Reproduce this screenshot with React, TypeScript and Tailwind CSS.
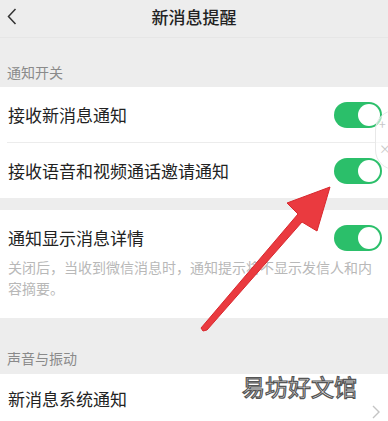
import React from 'react';

const Toggle: React.FC = () => (
    <div className="w-[48px] h-[26px] rounded-full bg-[#2bbf6a] flex items-center justify-end pr-[2px]">
        <div className="w-[22px] h-[22px] rounded-full bg-white" />
    </div>
);

export default function App() {
    return (
        <div
            className="relative w-[388px] h-[421px] overflow-hidden bg-[#ededed] text-[#222]"
            style={{ fontFamily: '"Noto Sans CJK SC", "Noto Sans", sans-serif' }}
        >
            {/* Header */}
            <div className="relative h-[38px] flex items-center justify-center border-b border-[#e6e6e6]">
                <svg className="absolute left-[7px] top-[8px]" width="10" height="17" viewBox="0 0 10 17">
                    <path d="M8.5 1 L1.5 8.5 L8.5 16" fill="none" stroke="#333" strokeWidth="1.5" />
                </svg>
                <span className="text-[17px] font-medium leading-none -mt-[4px]">新消息提醒</span>
            </div>

            {/* Section: 通知开关 */}
            <div className="h-[49px] flex items-end pb-[8px] px-[7px] text-[14px] text-[#8a8a8a] leading-none">
                通知开关
            </div>
            <div className="bg-white">
                <div className="h-[55px] flex items-center justify-between pl-[8px] pr-[6px]">
                    <span className="text-[17px]">接收新消息通知</span>
                    <Toggle />
                </div>
                <div className="ml-[7px] h-px bg-[#ececec]" />
                <div className="h-[55px] flex items-center justify-between pl-[8px] pr-[6px]">
                    <span className="text-[17px]">接收语音和视频通话邀请通知</span>
                    <Toggle />
                </div>
            </div>

            <div className="h-[12px]" />

            <div className="bg-white h-[108px] pl-[8px] pr-[6px] pt-[14px]">
                <div className="flex items-center justify-between h-[28px]">
                    <span className="text-[17px]">通知显示消息详情</span>
                    <Toggle />
                </div>
                <p className="mt-[5px] text-[14px] leading-[21px] text-[#b8b8b8] pr-[4px]">
                    关闭后，当收到微信消息时，通知提示将不显示发信人和内容摘要。
                </p>
            </div>

            {/* Section: 声音与振动 */}
            <div className="h-[56px] flex items-end pb-[9px] px-[7px] text-[14px] text-[#8a8a8a] leading-none">
                声音与振动
            </div>
            <div className="bg-white h-[60px] flex items-center justify-between pl-[8px] pr-[8px]">
                <span className="text-[17px] -mt-[10px]">新消息系统通知</span>
                <svg className="mt-[16px]" width="8" height="14" viewBox="0 0 8 14">
                    <path d="M1 1 L7 7 L1 13" fill="none" stroke="#c4c4c4" strokeWidth="1.4" />
                </svg>
            </div>

            {/* Side floating widget */}
            <div className="absolute left-[375px] top-[110px] w-[40px] h-[60px] rounded-full border border-[#e8e8e8] bg-white/60 flex flex-col items-start pl-[3px] text-[#c8c8c8] text-[12px] leading-[25px]">
                <span>+</span>
                <span>×</span>
            </div>

            {/* Red arrow */}
            <svg className="absolute left-0 top-0 pointer-events-none" width="388" height="421">
                <path
                    d="M203 331 L207 330 L302 222 L317 231 L330 187 L287 203 L298 214 L201 328 Z"
                    fill="#ea3a3f"
                    stroke="#d8282e"
                    strokeWidth="1"
                    strokeLinejoin="round"
                />
            </svg>

            {/* Watermark */}
            <div
                className="absolute left-[242px] top-[375px] text-[23px] leading-none text-white"
                style={{ WebkitTextStroke: '1.2px #555', fontFamily: '"Noto Sans CJK SC", sans-serif' }}
            >
                易坊好文馆
            </div>
        </div>
    );
}
